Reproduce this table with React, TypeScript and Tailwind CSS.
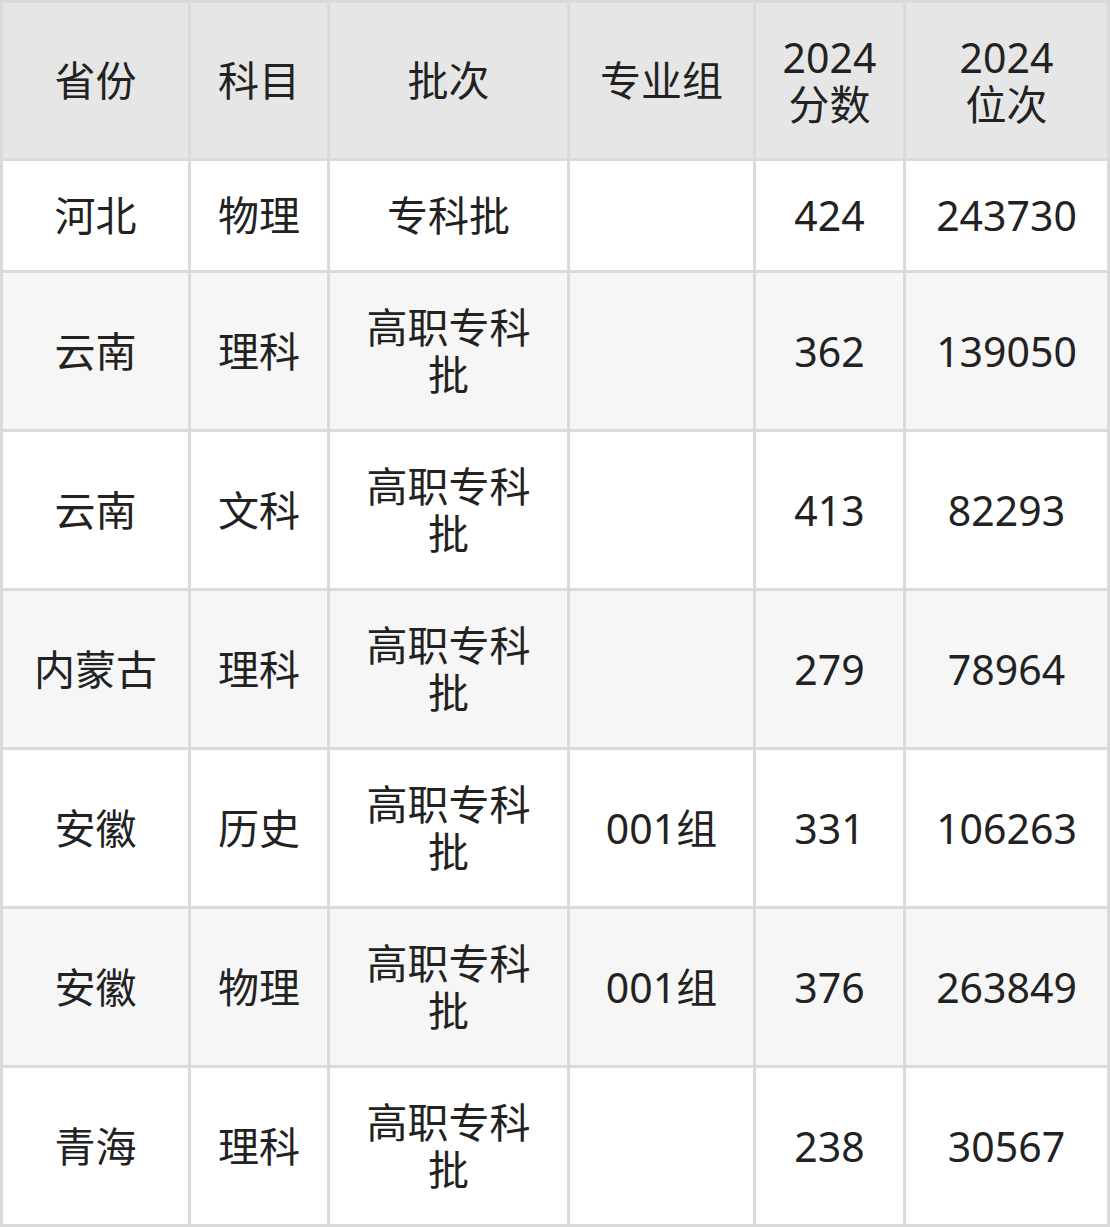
import React from "react";

const header: React.ReactNode[] = [
  "省份",
  "科目",
  "批次",
  "专业组",
  <>2024<br />分数</>,
  <>2024<br />位次</>,
];

const rows: string[][] = [
  ["河北", "物理", "专科批", "", "424", "243730"],
  ["云南", "理科", "高职专科|批", "", "362", "139050"],
  ["云南", "文科", "高职专科|批", "", "413", "82293"],
  ["内蒙古", "理科", "高职专科|批", "", "279", "78964"],
  ["安徽", "历史", "高职专科|批", "001组", "331", "106263"],
  ["安徽", "物理", "高职专科|批", "001组", "376", "263849"],
  ["青海", "理科", "高职专科|批", "", "238", "30567"],
];

function renderText(t: string) {
  const parts = t.split("|");
  return parts.map((p, i) => (
    <React.Fragment key={i}>
      {i > 0 && <br />}
      {p}
    </React.Fragment>
  ));
}

export default function App() {
  return (
    <div
      className="w-[1110px] h-[1227px] bg-[#dadada] p-[3px] grid gap-[3px] grid-cols-[185px_136px_237px_183px_147px_201px] grid-rows-[155px_109px_repeat(6,156px)] text-[41px] leading-[47px] text-[#222222]"
      style={{ fontFamily: '"Noto Sans", "Noto Sans CJK SC", sans-serif' }}
    >
      {header.map((h, i) => (
        <div key={`h${i}`} className="bg-[#e6e6e6] flex items-center justify-center text-center">
          <div>{h}</div>
        </div>
      ))}
      {rows.map((r, ri) =>
        r.map((c, ci) => (
          <div
            key={`${ri}-${ci}`}
            className={`${ri % 2 === 1 ? "bg-[#f6f6f6]" : "bg-white"} flex items-center justify-center text-center`}
          >
            <div>{renderText(c)}</div>
          </div>
        ))
      )}
    </div>
  );
}
